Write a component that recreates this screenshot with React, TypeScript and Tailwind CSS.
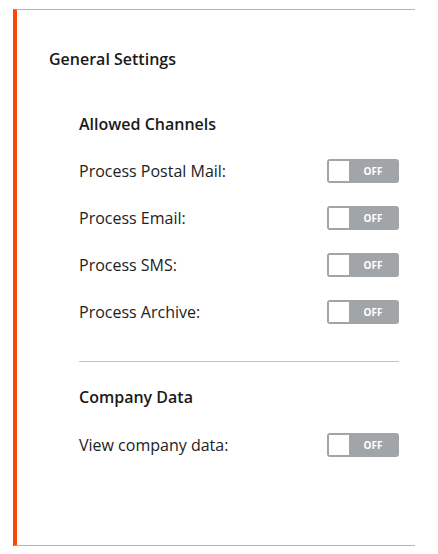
import React from 'react';

const channels = [
  'Process Postal Mail:',
  'Process Email:',
  'Process SMS:',
  'Process Archive:',
];

function Toggle() {
  return (
    <div className="flex h-6 w-[72px] items-center rounded-[3px] bg-[#a2a5a8] p-[2px]">
      <div className="h-5 w-5 bg-white" />
      <span className="flex-1 text-center text-[10px] font-bold leading-none text-white">OFF</span>
    </div>
  );
}

function Row({ label }: { label: string }) {
  return (
    <div className="flex h-6 items-center justify-between">
      <span className="text-[16px] leading-6 text-[#222]">{label}</span>
      <Toggle />
    </div>
  );
}

export default function App() {
  return (
    <div className="h-[554px] w-[438px] bg-white pt-[9px] pl-[13px] font-['Open_Sans',sans-serif]">
      <div className="h-[537px] w-[402px] border-y border-l-4 border-y-[#b5b5b5] border-l-[#fd4708] pt-[37px] pr-4 pl-8">
        <h2 className="text-[16px] font-semibold leading-6 text-[#1a1a1a]">General Settings</h2>

        <div className="mt-[41px] pl-[30px]">
          <h3 className="text-[16px] font-semibold leading-6 text-[#1a1a1a]">Allowed Channels</h3>
          <div className="mt-[23px] flex flex-col gap-[23px]">
            {channels.map((c) => (
              <Row key={c} label={c} />
            ))}
          </div>

          <div className="mt-[37px] h-px bg-[#c4c4c4]" />

          <h3 className="mt-[23px] text-[16px] font-semibold leading-6 text-[#1a1a1a]">Company Data</h3>
          <div className="mt-[24px]">
            <Row label="View company data:" />
          </div>
        </div>
      </div>
    </div>
  );
}
